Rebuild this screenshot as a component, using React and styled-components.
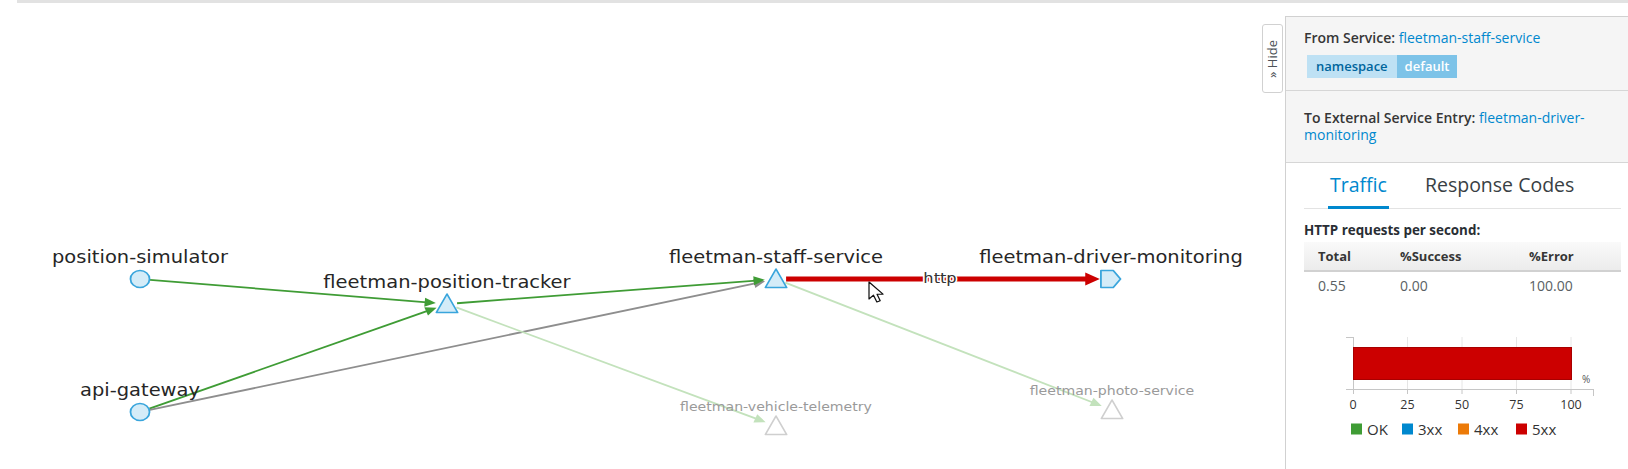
import React from "react";
import styled, { createGlobalStyle } from "styled-components";

// the captured graph is stretched horizontally, so the svg is drawn in
// unstretched units and scaled back out with preserveAspectRatio="none"
const SX = 1.12;
const GRAPH_W = 1262;
const GRAPH_H = 466;

const GlobalStyle = createGlobalStyle`
  html, body {
    margin: 0;
    padding: 0;
    background: #fff;
  }
  body {
    font-family: "Open Sans", "Liberation Sans", sans-serif;
    color: #363636;
    overflow: hidden;
  }
`;

const Page = styled.div`
  width: 1628px;
  height: 469px;
  overflow: hidden;
  background: #fff;
`;

const TopRule = styled.div`
  height: 3px;
  margin-left: 17px;
  background: #e2e2e2;
`;

const Main = styled.div`
  display: flex;
  height: 466px;
`;

const GraphArea = styled.div`
  flex: 1;
  min-width: 0;
`;

const GraphSvg = styled.svg`
  display: block;
  width: 100%;
  height: 100%;
  font-family: "DejaVu Sans", Verdana, sans-serif;
`;

const HideTab = styled.div`
  box-sizing: border-box;
  width: 21px;
  height: 69px;
  margin: 21px 2px 0 0;
  border: 1px solid #d1d1d1;
  border-radius: 3px;
  background: #fff;
  display: flex;
  align-items: center;
  justify-content: center;
  color: #4d5258;
  font-size: 13px;
`;

const HideLabel = styled.span`
  writing-mode: vertical-rl;
  transform: rotate(180deg);
  white-space: nowrap;
  line-height: 1;
`;

const SidePanel = styled.aside`
  box-sizing: border-box;
  width: 343px;
  margin-top: 13px;
  border-left: 1px solid #d1d1d1;
  border-top: 1px solid #d1d1d1;
  background: #fff;
  display: flex;
  flex-direction: column;
`;

const PanelSection = styled.div`
  background: #f5f5f5;
  border-bottom: 1px solid #d6d6d6;
  padding: ${({ $pad }) => $pad};
`;

const InfoLine = styled.div`
  font-size: 14px;
  line-height: 17px;
`;

const Strong = styled.span`
  font-weight: 600;
  color: #363636;
`;

const Link = styled.span`
  color: #0088ce;
`;

const Badge = styled.div`
  display: flex;
  width: fit-content;
  margin: 9px 0 0 3px;
  height: 23px;
  line-height: 23px;
  font-size: 13px;
  font-weight: 600;
`;

const BadgeKey = styled.span`
  padding: 0 9px;
  background: #bee1f4;
  color: #00659c;
`;

const BadgeValue = styled.span`
  padding: 0 8px;
  background: #7dc3e8;
  color: #fff;
`;

const PanelBody = styled.div`
  padding: 0 7px 0 18px;
`;

const TabList = styled.div`
  display: flex;
  gap: 34px;
  padding-left: 24px;
  border-bottom: 1px solid #e3e3e3;
`;

const Tab = styled.div`
  padding: 10px 2px 9px;
  margin-bottom: -1px;
  font-size: 19.5px;
  line-height: 24px;
  color: ${({ $active }) => ($active ? "#0088ce" : "#393f44")};
  border-bottom: 3px solid ${({ $active }) => ($active ? "#0088ce" : "transparent")};
`;

const SectionTitle = styled.div`
  margin-top: 12px;
  font-size: 13.4px;
  font-weight: 700;
  line-height: 18px;
  color: #292e34;
`;

const RateTable = styled.table`
  width: 100%;
  margin-top: 3px;
  border-collapse: collapse;
  table-layout: fixed;

  th {
    height: 28px;
    padding: 0 0 0 14px;
    text-align: left;
    font-size: 13px;
    font-weight: 700;
    color: #363636;
    background: linear-gradient(#fafafa, #ececec);
    border-bottom: 2px solid #d1d1d1;
  }

  td {
    height: 26px;
    padding: 0 0 0 14px;
    font-size: 14px;
    color: #5a5f64;
  }
`;

const ChartSvg = styled.svg`
  display: block;
  margin-top: 12px;
  font-family: "Open Sans", "Liberation Sans", sans-serif;
`;

const nodes = {
  sim: { x: 140, y: 279, shape: "circle", label: "position-simulator" },
  api: { x: 140, y: 412, shape: "circle", label: "api-gateway" },
  tracker: { x: 447, y: 304, shape: "triangle", label: "fleetman-position-tracker" },
  staff: { x: 776, y: 279, shape: "triangle", label: "fleetman-staff-service" },
  driver: { x: 1111, y: 279, shape: "tag", label: "fleetman-driver-monitoring" },
  telemetry: { x: 776, y: 426, shape: "triangle", label: "fleetman-vehicle-telemetry", faded: true },
  photo: { x: 1112, y: 410, shape: "triangle", label: "fleetman-photo-service", faded: true },
};

const edges = [
  { from: "sim", to: "tracker", color: "#3f9c35" },
  { from: "api", to: "tracker", color: "#3f9c35" },
  { from: "api", to: "staff", color: "#8e8e8e" },
  { from: "tracker", to: "staff", color: "#3f9c35" },
  { from: "tracker", to: "telemetry", color: "#c3e2bc" },
  { from: "staff", to: "photo", color: "#c3e2bc" },
  { from: "staff", to: "driver", color: "#cc0000", width: 5, head: 13, spread: 6.5, label: "http" },
];

const ux = (x) => x / SX;

function NodeShape({ node }) {
  const cx = ux(node.x);
  const cy = node.y;
  const fill = node.faded ? "#fff" : "#d4ecf8";
  const stroke = node.faded ? "#cfcfcf" : "#39a5dc";
  if (node.shape === "circle") {
    return <circle cx={cx} cy={cy} r={8.5} fill={fill} stroke={stroke} strokeWidth={1.6} />;
  }
  if (node.shape === "tag") {
    const d = `M${cx - 9} ${cy - 8.5} H${cx + 2} L${cx + 8.5} ${cy} L${cx + 2} ${cy + 8.5} H${cx - 9} Z`;
    return <path d={d} fill={fill} stroke={stroke} strokeWidth={1.6} strokeLinejoin="round" />;
  }
  const pts = `${cx},${cy - 10} ${cx + 9.5},${cy + 8.5} ${cx - 9.5},${cy + 8.5}`;
  return <polygon points={pts} fill={fill} stroke={stroke} strokeWidth={1.6} strokeLinejoin="round" />;
}

function Edge({ edge }) {
  const a = nodes[edge.from];
  const b = nodes[edge.to];
  const x1 = ux(a.x);
  const x2 = ux(b.x);
  const dx = x2 - x1;
  const dy = b.y - a.y;
  const len = Math.hypot(dx, dy);
  const nx = dx / len;
  const ny = dy / len;
  const head = edge.head || 10;
  const spread = edge.spread || 4.5;
  const sx = x1 + nx * 9;
  const sy = a.y + ny * 9;
  const tx = x2 - nx * 10;
  const ty = b.y - ny * 10;
  const bx = tx - nx * head;
  const by = ty - ny * head;
  const arrow = `${tx},${ty} ${bx - ny * spread},${by + nx * spread} ${bx + ny * spread},${by - nx * spread}`;
  return (
    <g>
      <line
        x1={sx}
        y1={sy}
        x2={bx + nx * 2}
        y2={by + ny * 2}
        stroke={edge.color}
        strokeWidth={edge.width || 1.8}
      />
      <polygon points={arrow} fill={edge.color} />
    </g>
  );
}

function ServiceGraph() {
  return (
    <GraphSvg viewBox={`0 3 ${GRAPH_W / SX} ${GRAPH_H}`} preserveAspectRatio="none">
      {edges.map((edge) => (
        <Edge key={edge.from + edge.to} edge={edge} />
      ))}
      <text
        x={ux(940)}
        y={283}
        textAnchor="middle"
        fontSize={14.5}
        fill="#333"
        stroke="#fff"
        strokeWidth={3}
        paintOrder="stroke"
      >
        http
      </text>
      {Object.entries(nodes).map(([key, node]) => (
        <g key={key}>
          <NodeShape node={node} />
          <text
            x={ux(node.x)}
            y={node.faded ? node.y - 14.5 : node.y - 16}
            textAnchor="middle"
            fontSize={node.faded ? 12.6 : 17.4}
            fill={node.faded ? "#9a9a9a" : "#262626"}
          >
            {node.label}
          </text>
        </g>
      ))}
      {/* mouse pointer */}
      <path
        transform={`translate(${ux(869)} 282)`}
        d="M0 0 V17 L4 13.2 L7 20 L10 18.8 L7.2 12.2 H12.5 Z"
        fill="#fff"
        stroke="#111"
        strokeWidth={1.1}
        strokeLinejoin="round"
      />
    </GraphSvg>
  );
}

const ticks = [0, 25, 50, 75, 100];
const plotX = 49;
const plotW = 218;
const tickX = (v) => plotX + (v / 100) * plotW;

const legend = [
  { label: "OK", color: "#3f9c35", x: 47 },
  { label: "3xx", color: "#0088ce", x: 98 },
  { label: "4xx", color: "#ec7a08", x: 154 },
  { label: "5xx", color: "#cc0000", x: 212 },
];

function ResponseChart() {
  return (
    <ChartSvg width={317} height={150}>
      {ticks.slice(1).map((v) => (
        <line key={v} x1={tickX(v)} y1={27} x2={tickX(v)} y2={79} stroke="#e6e6e6" />
      ))}
      <line x1={42} y1={27.5} x2={plotX} y2={27.5} stroke="#c6c6c6" />
      <line x1={plotX + 0.5} y1={27} x2={plotX + 0.5} y2={84} stroke="#c6c6c6" />
      <line x1={42} y1={79.5} x2={289} y2={79.5} stroke="#c6c6c6" />
      <line x1={289.5} y1={79} x2={289.5} y2={86} stroke="#c6c6c6" />
      {ticks.slice(1).map((v) => (
        <line key={v} x1={tickX(v)} y1={79} x2={tickX(v)} y2={84} stroke="#c6c6c6" />
      ))}
      <rect x={plotX + 0.5} y={37.5} width={plotW} height={32} fill="#cc0000" stroke="#a80000" />
      <text x={278} y={73} fontSize={10} fill="#555">
        %
      </text>
      {ticks.map((v) => (
        <text key={v} x={tickX(v)} y={98.5} textAnchor="middle" fontSize={12.5} fill="#333">
          {v}
        </text>
      ))}
      {legend.map((item) => (
        <g key={item.label}>
          <rect x={item.x} y={113.5} width={11} height={11} fill={item.color} />
          <text x={item.x + 16} y={124.5} fontSize={15} fill="#333">
            {item.label}
          </text>
        </g>
      ))}
    </ChartSvg>
  );
}

export default function App() {
  return (
    <Page>
      <GlobalStyle />
      <TopRule />
      <Main>
        <GraphArea>
          <ServiceGraph />
        </GraphArea>
        <HideTab>
          <HideLabel>» Hide</HideLabel>
        </HideTab>
        <SidePanel>
          <PanelSection $pad="12px 18px 12px">
            <InfoLine>
              <Strong>From Service:</Strong> <Link>fleetman-staff-service</Link>
            </InfoLine>
            <Badge>
              <BadgeKey>namespace</BadgeKey>
              <BadgeValue>default</BadgeValue>
            </Badge>
          </PanelSection>
          <PanelSection $pad="18px 10px 19px 18px">
            <InfoLine>
              <Strong>To External Service Entry:</Strong>{" "}
              <Link>fleetman-driver-monitoring</Link>
            </InfoLine>
          </PanelSection>
          <PanelBody>
            <TabList>
              <Tab $active>Traffic</Tab>
              <Tab>Response Codes</Tab>
            </TabList>
            <SectionTitle>HTTP requests per second:</SectionTitle>
            <RateTable>
              <colgroup>
                <col style={{ width: 82 }} />
                <col style={{ width: 129 }} />
                <col />
              </colgroup>
              <thead>
                <tr>
                  <th>Total</th>
                  <th>%Success</th>
                  <th>%Error</th>
                </tr>
              </thead>
              <tbody>
                <tr>
                  <td>0.55</td>
                  <td>0.00</td>
                  <td>100.00</td>
                </tr>
              </tbody>
            </RateTable>
            <ResponseChart />
          </PanelBody>
        </SidePanel>
      </Main>
    </Page>
  );
}
